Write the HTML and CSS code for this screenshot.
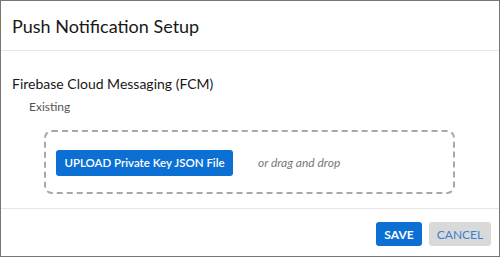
FILE: index.html
```html
<!DOCTYPE html>
<html lang="en">
<head>
    <meta charset="UTF-8">
    <meta name="viewport" content="width=device-width, initial-scale=1.0">
    <title>Push Notification Setup</title>
    <link rel="stylesheet" href="styles.css">
</head>
<body>
    <div class="modal">
        <div class="modal-header">
            <h2>Push Notification Setup</h2>
        </div>
        <div class="modal-body">
            <h3>Firebase Cloud Messaging (FCM)</h3>
            <div class="existing">Existing</div>
            <div class="dropzone">
                <button class="btn btn-brand upload-btn">UPLOAD Private Key JSON File</button>
                <span class="drop-hint">or drag and drop</span>
            </div>
        </div>
        <div class="modal-footer">
            <button class="btn btn-brand">SAVE</button>
            <button class="btn btn-neutral">CANCEL</button>
        </div>
    </div>
</body>
</html>
```

FILE: styles.css
```css
body {
    margin: 0;
    font-family: Lato, "Open Sans", sans-serif;
    color: #181818;
    background-color: #fff;
}
.modal {
    width: 500px;
    height: 257px;
    box-sizing: border-box;
    border: 1px solid #777;
    display: flex;
    flex-direction: column;
}
.modal-header {
    height: 49px;
    padding-left: 11px;
    border-bottom: 1px solid #e6e6e6;
    display: flex;
    align-items: center;
}
.modal-header h2 {
    margin: 0;
    font-size: 18px;
    font-weight: normal;
}
.modal-body {
    padding: 23px 11px 14px;
    border-bottom: 1px solid #e6e6e6;
}
.modal-body h3 {
    margin: 0;
    font-size: 14px;
    line-height: 20px;
    font-weight: normal;
}
.existing {
    margin: 5px 0 15px 17px;
    font-size: 12px;
    line-height: 16px;
    color: #555;
}
.dropzone {
    margin-left: 32px;
    width: 411px;
    height: 64px;
    box-sizing: border-box;
    border: 2px dashed #a8a8a8;
    border-radius: 8px;
    padding: 0 10px;
    display: flex;
    align-items: center;
}
.btn {
    font-family: inherit;
    font-size: 12px;
    font-weight: bold;
    border: none;
    border-radius: 3px;
    height: 24px;
    padding: 0 9px;
    cursor: pointer;
}
.btn-brand {
    background-color: #0b6fd4;
    color: #fff;
}
.btn-neutral {
    background-color: #d9d9d9;
    color: #3a7fd0;
    font-weight: normal;
}
.upload-btn {
    height: 26px;
    width: 177px;
    padding: 0;
    margin-top: 1px;
    font-size: 11.5px;
    font-weight: 600;
}
.drop-hint {
    margin-left: 25px;
    font-size: 12px;
    font-style: italic;
    color: #777;
}
.modal-footer {
    flex: 1;
    display: flex;
    justify-content: flex-end;
    align-items: flex-start;
    gap: 7px;
    padding: 13px 8px 0 0;
}
.modal-footer .btn-brand {
    width: 46px;
    padding: 0;
}
.modal-footer .btn-neutral {
    width: 62px;
    padding: 0;
}
```
